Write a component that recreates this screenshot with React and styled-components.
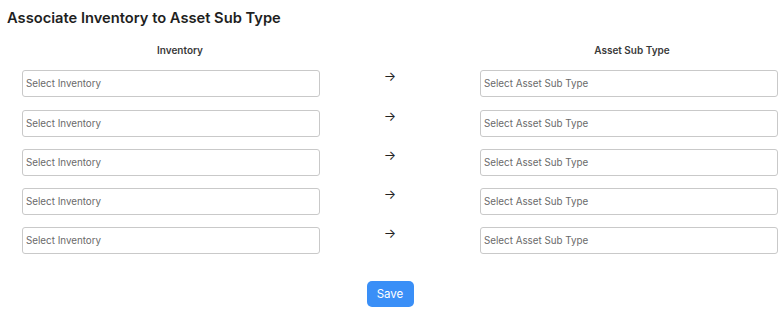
import styled, { createGlobalStyle } from "styled-components";

// Global page reset
const GlobalStyle = createGlobalStyle`
  body {
    margin: 0;
    background: #ffffff;
    font-family: Inter, "Liberation Sans", sans-serif;
    color: #222;
  }
`;

const Page = styled.div`
  padding: 9px 7px 0 7px;
`;

const Title = styled.h2`
  margin: 0;
  font-size: 14.7px;
  line-height: 19px;
  font-weight: 600;
  color: #1f1f1f;
`;

const Grid = styled.div`
  display: grid;
  grid-template-columns: 346px 74px 1fr;
  row-gap: 12.3px;
  margin-top: 16px;
`;

const ColumnHeading = styled.div`
  font-size: 10px;
  font-weight: 600;
  line-height: 12px;
  color: #3a3a3a;
  text-align: center;
  padding-left: ${(p) => p.$shift || 0}px;
  margin-bottom: 2px;
`;

const Cell = styled.div`
  padding-left: ${(p) => p.$indent}px;
  height: 27px;
`;

const Select = styled.input`
  box-sizing: border-box;
  width: 298px;
  height: 27px;
  margin: 0;
  padding: 0 4px 0 3px;
  border: 1px solid #c9c9c9;
  border-radius: 3px;
  font-family: Inter, "Liberation Sans", sans-serif;
  font-size: 9.8px;
  color: #333;
  outline: none;
  &::placeholder {
    color: #6a6a6a;
  }
`;

const Arrow = styled.div`
  text-align: center;
  font-size: 13px;
  line-height: 13px;
  color: #222;
`;

const Footer = styled.div`
  display: flex;
  justify-content: center;
  margin-top: 27px;
`;

const SaveButton = styled.button`
  height: 26px;
  width: 47px;
  padding: 0;
  border: none;
  border-radius: 5px;
  background: #3a8ff7;
  color: #fff;
  font-family: Inter, "Liberation Sans", sans-serif;
  font-size: 11.5px;
  cursor: pointer;
`;

const rows = [1, 2, 3, 4, 5];

// One mapping row: inventory select, arrow, asset sub type select
const Row = () => (
  <>
    <Cell $indent={15}>
      <Select placeholder="Select Inventory" />
    </Cell>
    <Arrow>→</Arrow>
    <Cell $indent={53}>
      <Select placeholder="Select Asset Sub Type" />
    </Cell>
  </>
);

const App = () => {
  return (
    <Page>
      <GlobalStyle />
      <Title>Associate Inventory to Asset Sub Type</Title>
      <Grid>
        <ColumnHeading $shift={0}>Inventory</ColumnHeading>
        <div />
        <ColumnHeading $shift={59}>Asset Sub Type</ColumnHeading>
        {rows.map((r) => (
          <Row key={"row-" + r} />
        ))}
      </Grid>
      <Footer>
        <SaveButton>Save</SaveButton>
      </Footer>
    </Page>
  );
};

export default App;
